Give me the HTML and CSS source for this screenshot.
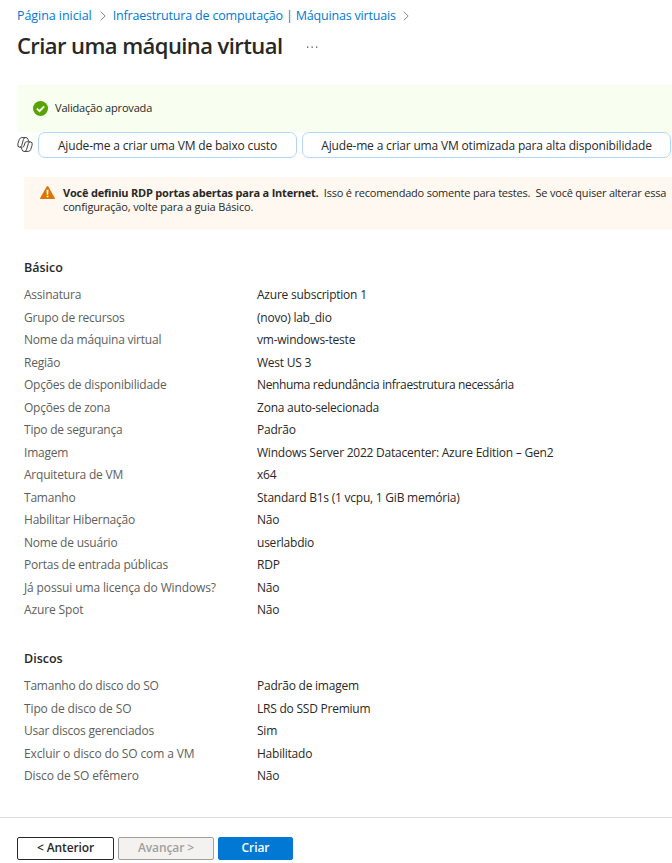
FILE: index.html
```html
<!DOCTYPE html>
<html lang="pt-BR">
<head>
<meta charset="utf-8">
<title>Criar uma máquina virtual</title>
<link rel="stylesheet" href="styles.css">
</head>
<body>
<nav class="breadcrumb">
  <a>Página inicial</a>
  <svg class="chevron" viewBox="0 0 6 10"><path d="M.7.7 5.2 5 .7 9.3"/></svg>
  <a class="crumb-long">Infraestrutura de computação | Máquinas virtuais</a>
  <svg class="chevron last" viewBox="0 0 6 10"><path d="M.7.7 5.2 5 .7 9.3"/></svg>
</nav>
<header class="title-row">
  <h1>Criar uma máquina virtual</h1>
  <svg class="more" viewBox="0 0 11 2"><path d="M0 .5h1.3v1.2H0zM4.5.5h1.3v1.2H4.5zM9 .5h1.3v1.2H9z"/></svg>
</header>
<div class="validation">
  <svg class="check" viewBox="0 0 15 15"><circle cx="7.5" cy="7.5" r="7.5"/><path d="M3.9 7.6 6.5 10.1 11.2 5.3"/></svg>
  <span>Validação aprovada</span>
</div>
<div class="copilot">
  <svg class="copilot-icon" viewBox="0 0 16 15">
    <path d="M11.500 4.200 11 2.300Q10.500.6 9 .6H4.800Q3 .6 2.300 2.500L.9 6.700Q0 10.200 2.800 10.200H5"/>
    <path d="M4.500 10.800 5 12.700Q5.500 14.400 7 14.400H11.200Q13 14.400 13.700 12.500L15.100 8.300Q16 4.800 13.200 4.800H11"/>
    <path d="M8.200.6Q7 .6 6.400 2.500L4.700 8.500Q4.200 10.200 2.800 10.200M7.800 14.400Q9 14.400 9.600 12.500L11.300 6.500Q11.800 4.800 13.200 4.800M11 4.800H9.400Q8.400 4.800 8 5.900L6.900 9.100Q6.500 10.200 5.500 10.200"/>
  </svg>
  <button class="pill pill-cost">Ajude-me a criar uma VM de baixo custo</button>
  <button class="pill pill-avail">Ajude-me a criar uma VM otimizada para alta disponibilidade</button>
</div>
<div class="warning">
  <svg class="alert" viewBox="0 0 15 13"><path class="tri" d="M6.500.8Q7.500-.8 8.500.8L14.800 12Q15.200 13 14.200 13H.8Q-.2 13 .2 12Z"/><path class="bang" d="M6.500 3.800h2l-.3 4.900H6.800zM6.600 9.700h1.800v1.600H6.600z"/></svg>
  <p><strong>Você definiu RDP portas abertas para a Internet.</strong>&nbsp; Isso é recomendado somente para testes. &nbsp;Se você quiser alterar essa<br><span class="second">configuração, volte para a guia Básico.</span></p>
</div>
<section class="basic">
  <h2>Básico</h2>
  <dl>
    <dt>Assinatura</dt><dd>Azure subscription 1</dd>
    <dt>Grupo de recursos</dt><dd>(novo) lab_dio</dd>
    <dt>Nome da máquina virtual</dt><dd>vm-windows-teste</dd>
    <dt>Região</dt><dd>West US 3</dd>
    <dt>Opções de disponibilidade</dt><dd class="tight">Nenhuma redundância infraestrutura necessária</dd>
    <dt>Opções de zona</dt><dd>Zona auto-selecionada</dd>
    <dt>Tipo de segurança</dt><dd>Padrão</dd>
    <dt>Imagem</dt><dd>Windows Server 2022 Datacenter: Azure Edition – Gen2</dd>
    <dt>Arquitetura de VM</dt><dd>x64</dd>
    <dt>Tamanho</dt><dd>Standard B1s (1 vcpu, 1 GiB memória)</dd>
    <dt>Habilitar Hibernação</dt><dd>Não</dd>
    <dt>Nome de usuário</dt><dd>userlabdio</dd>
    <dt>Portas de entrada públicas</dt><dd>RDP</dd>
    <dt class="loose">Já possui uma licença do Windows?</dt><dd>Não</dd>
    <dt class="loose">Azure Spot</dt><dd>Não</dd>
  </dl>
</section>
<section class="disks">
  <h2>Discos</h2>
  <dl>
    <dt>Tamanho do disco do SO</dt><dd>Padrão de imagem</dd>
    <dt class="loose">Tipo de disco de SO</dt><dd>LRS do SSD Premium</dd>
    <dt>Usar discos gerenciados</dt><dd>Sim</dd>
    <dt class="loose">Excluir o disco do SO com a VM</dt><dd>Habilitado</dd>
    <dt class="loose">Disco de SO efêmero</dt><dd>Não</dd>
  </dl>
</section>
<footer>
  <button class="btn prev">&lt; Anterior</button>
  <button class="btn next" disabled>Avançar &gt;</button>
  <button class="btn create">Criar</button>
</footer>
</body>
</html>
```
FILE: styles.css
```css
* { box-sizing: border-box; }
body {
  margin: 0;
  height: 863px;
  overflow: hidden;
  display: flex;
  flex-direction: column;
  background: #fff;
  color: #292827;
  font: 12px/15px "Open Sans", "Noto Sans", sans-serif;
}
body > * { flex: none; }
svg { display: block; flex: none; }
.breadcrumb { display: flex; align-items: center; height: 31px; padding-left: 17px; white-space: nowrap; color: #0078d4; }
.breadcrumb a { font-size: 12.5px; letter-spacing: -.06px; }
.breadcrumb .crumb-long { letter-spacing: -.18px; }
.chevron { width: 6px; height: 10px; margin: 0 7px 0 8px; fill: none; stroke: #8a8886; stroke-width: 1; }
.last { margin-left: 7px; }
.title-row { display: flex; align-items: center; height: 31px; padding-left: 17px; }
h1 { margin: -4px 0 0; font-size: 22px; line-height: 30px; font-weight: 600; letter-spacing: -.58px; white-space: nowrap; }
.more { width: 11px; height: 2px; margin-left: 25px; fill: #444; }
.validation { display: flex; align-items: center; gap: 7px; height: 47px; margin: 23px 0 0 17px; padding-left: 16px; background: #f8fff0; font-size: 11px; letter-spacing: -.18px; }
.validation span { margin-top: -2px; }
.check { width: 15px; height: 15px; fill: #57a300; }
.check path { fill: none; stroke: #fff; stroke-width: 1.9; }
.copilot { display: flex; height: 26px; padding-left: 17px; }
.copilot-icon { width: 16px; height: 15px; margin: 5px 5px 0 0; fill: none; stroke: #424242; stroke-width: 1; }
.pill { height: 26px; padding: 2px 0 0; border: 1px solid #b4d6fa; border-radius: 7px; background: #fff; color: #292827; font: 12px/22px "Open Sans", "Noto Sans", sans-serif; letter-spacing: -.17px; white-space: nowrap; }
.pill-cost { width: 259px; margin-right: 5px; }
.pill-avail { width: 369px; }
.warning { display: flex; height: 53px; margin: 19px 0 0 24px; padding: 9px 0 0 16px; background: #fff8f1; font-size: 11px; line-height: 14px; letter-spacing: -.21px; white-space: nowrap; }
.alert { width: 15px; height: 13px; margin-right: 8px; }
.tri { fill: #db7500; }
.bang { fill: #fff; }
.warning p { margin: 0; }
.second { letter-spacing: -.14px; }
section { padding-left: 24px; }
h2 { margin: 0; font-size: 12.5px; line-height: 16px; font-weight: 600; }
.basic { margin-top: 30px; }
.disks { margin-top: 29px; }
dl { display: grid; grid-template-columns: 233px 1fr; grid-auto-rows: 22.5px; margin: 8px 0 0; line-height: 22.5px; white-space: nowrap; }
.disks dl { margin-top: 8.5px; }
dt { color: #605e5c; letter-spacing: -.22px; }
.loose { letter-spacing: -.13px; }
dd { margin: 0; letter-spacing: -.23px; }
.tight { letter-spacing: -.36px; }
footer { display: flex; gap: 4px; margin-top: auto; height: 46px; padding: 19px 0 0 17px; border-top: 1px solid #dcdcdc; }
.btn { height: 23px; padding: 0 0 1px; border: 1px solid #292827; border-radius: 2px; background: #fff; color: #292827; font: 600 12px/20px "Open Sans", "Noto Sans", sans-serif; letter-spacing: -.1px; }
.prev { width: 97px; }
.next { width: 96px; border-color: #a19f9d; background: #f3f2f1; color: #a19f9d; }
.create { width: 75px; border-color: #0078d4; background: #0078d4; color: #fff; }
```
